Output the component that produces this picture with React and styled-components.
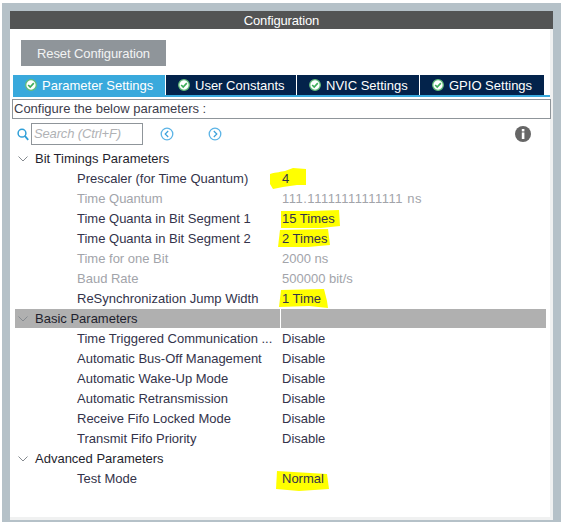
import React from 'react';
import styled, { createGlobalStyle } from 'styled-components';

const GlobalStyle = createGlobalStyle`
    html, body {
        margin: 0;
        padding: 0;
        background: #ffffff;
    }
    body {
        font-family: "Liberation Sans", Arial, sans-serif;
        font-size: 13px;
    }
`

const Frame = styled.div`
    box-sizing: border-box;
    width: 559px;
    height: 519px;
    margin: 3px 0 0 2px;
    padding: 8px 8px 2px;
    background: #b5c1c8;
`

const Panel = styled.div`
    box-sizing: border-box;
    height: 100%;
    background: #ffffff;
    border-right: 3px solid #f0f1f1;
    border-bottom: 3px solid #f0f1f1;
    display: flex;
    flex-direction: column;
`

const Header = styled.div`
    height: 18px;
    margin-right: -3px;
    background: #535454;
    color: #ffffff;
    line-height: 19px;
    text-align: center;
    letter-spacing: -0.15px;
`

const ResetButton = styled.button`
    box-sizing: border-box;
    width: 145px;
    height: 26px;
    margin: 11px 0 0 11px;
    padding: 0;
    border: 0;
    background: #8f959a;
    color: #f2f3f4;
    font: 13px "Liberation Sans", Arial, sans-serif;
    letter-spacing: -0.1px;
`

const TabBar = styled.div`
    display: flex;
    gap: 1px;
    height: 20px;
    margin: 9px 0 0 3px;
    border-bottom: 2px solid #39a9dc;
`

const Tab = styled.div`
    box-sizing: border-box;
    width: ${p => p.$width}px;
    display: flex;
    align-items: center;
    padding-left: 12px;
    gap: 5px;
    background: ${p => (p.$active ? '#39a9dc' : '#03234b')};
    color: #ffffff;
    white-space: nowrap;
`

const ConfigureBox = styled.div`
    box-sizing: border-box;
    width: 539px;
    height: 20px;
    margin: 2px 0 0 2px;
    padding-left: 1px;
    border: 1px solid #8f959a;
    color: #3c3c4b;
    line-height: 18px;
`

const SearchBar = styled.div`
    position: relative;
    display: flex;
    align-items: center;
    height: 22px;
    margin-top: 4px;
    padding-left: 7px;
`

const SearchInput = styled.div`
    box-sizing: border-box;
    width: 112px;
    height: 22px;
    margin-left: 2px;
    padding-left: 2px;
    border: 1px solid #8f959a;
    color: #b0b2b5;
    font-style: italic;
    line-height: 20px;
    letter-spacing: -0.15px;
`

const NavButton = styled.svg`
    margin-left: ${p => p.$gap}px;
`

const InfoIcon = styled.svg`
    margin-left: 293px;
`

const Tree = styled.div`
    margin: 4px 0 0 5px;
    width: 531px;
`

const Row = styled.div`
    display: grid;
    grid-template-columns: 265px 1px 1fr;
    height: 20px;
    line-height: 20px;
    color: ${p => (p.$muted ? '#a2a4aa' : '#33334a')};
    background: ${p => (p.$shaded ? '#b0b0b0' : 'transparent')};
    ${p => p.$shaded && 'height: 19px; margin-bottom: 1px; line-height: 19px;'}
`

const SectionName = styled.div`
    display: flex;
    align-items: center;
    gap: 7px;
    padding-left: 3px;
    color: #1f1f2e;
`

const ParamName = styled.div`
    padding-left: 62px;
    white-space: nowrap;
`

const Divider = styled.div`
    background: ${p => (p.$visible ? '#ffffff' : 'transparent')};
`

const Value = styled.div`
    position: relative;
    padding-left: 1px;
    white-space: nowrap;
`

const ValueText = styled.span`
    position: relative;
    letter-spacing: ${p => p.$tracking || 0}px;
`

const Marker = styled.svg`
    position: absolute;
    left: ${p => p.$left}px;
    top: ${p => p.$top}px;
`

function CheckIcon() {
    return (
        <svg width="12" height="12" viewBox="0 0 12 12">
            <circle cx="6" cy="6" r="5.3" fill="#ffffff" stroke="#62bd78" strokeWidth="1.3" />
            <path d="M3.2 6 5.2 8 8.8 4.2" fill="none" stroke="#3fae5a" strokeWidth="1.7" />
        </svg>
    )
}

function Chevron() {
    return (
        <svg width="10" height="6" viewBox="0 0 10 6">
            <path d="M0.5 0.5 5 5 9.5 0.5" fill="none" stroke="#858a8f" strokeWidth="1" />
        </svg>
    )
}

function SearchIcon() {
    return (
        <svg width="12" height="13" viewBox="0 0 12 13">
            <circle cx="5" cy="5.2" r="3.9" fill="none" stroke="#2f9fd8" strokeWidth="1.5" />
            <path d="M8 8.2 11.2 11.8" stroke="#2f9fd8" strokeWidth="1.8" />
        </svg>
    )
}

function RoundNav({ dir, gap }) {
    const d = dir === 'left' ? 'M8.2 4 5.2 7 8.2 10' : 'M5.8 4 8.8 7 5.8 10'
    return (
        <NavButton $gap={gap} width="14" height="14" viewBox="0 0 14 14">
            <circle cx="7" cy="7" r="5.8" fill="none" stroke="#5cb4e6" strokeWidth="1.3" />
            <path d={d} fill="none" stroke="#39a0dc" strokeWidth="1.2" />
        </NavButton>
    )
}

const markers = {
    prescaler: { left: -12, top: -1, w: 37, h: 21, d: 'M1 6 C8 4 12 4 16 3 L24 0 L37 1 L37 17 L28 17 L14 19 L4 21 L1 16 Z' },
    seg1: { left: 0, top: 1, w: 59, h: 18, d: 'M0 1 L30 1 L58 0 L59 16 L40 18 L0 18 Z' },
    seg2: { left: -3, top: 0, w: 52, h: 18, d: 'M2 1 L50 0 L52 16 L30 18 L0 18 Z' },
    jump: { left: -2, top: 0, w: 50, h: 20, d: 'M2 1 L45 0 L48 12 L49 19 L30 17 L0 18 Z' },
    test: { left: -6, top: 2, w: 54, h: 20, d: 'M2 0 L52 3 L54 18 L24 20 L1 18 Z' },
}

const sections = [
    {
        name: 'Bit Timings Parameters',
        params: [
            { name: 'Prescaler (for Time Quantum)', value: '4', marker: 'prescaler' },
            { name: 'Time Quantum', value: '111.11111111111111 ns', muted: true, tracking: 0.5 },
            { name: 'Time Quanta in Bit Segment 1', value: '15 Times', marker: 'seg1' },
            { name: 'Time Quanta in Bit Segment 2', value: '2 Times', marker: 'seg2' },
            { name: 'Time for one Bit', value: '2000 ns', muted: true },
            { name: 'Baud Rate', value: '500000 bit/s', muted: true },
            { name: 'ReSynchronization Jump Width', value: '1 Time', marker: 'jump' },
        ],
    },
    {
        name: 'Basic Parameters',
        shaded: true,
        params: [
            { name: 'Time Triggered Communication ...', value: 'Disable' },
            { name: 'Automatic Bus-Off Management', value: 'Disable' },
            { name: 'Automatic Wake-Up Mode', value: 'Disable' },
            { name: 'Automatic Retransmission', value: 'Disable' },
            { name: 'Receive Fifo Locked Mode', value: 'Disable' },
            { name: 'Transmit Fifo Priority', value: 'Disable' },
        ],
    },
    {
        name: 'Advanced Parameters',
        params: [{ name: 'Test Mode', value: 'Normal', marker: 'test' }],
    },
]

const tabs = [
    { label: 'Parameter Settings', width: 152, active: true },
    { label: 'User Constants', width: 130 },
    { label: 'NVIC Settings', width: 122 },
    { label: 'GPIO Settings', width: 124 },
]

function App() {
    return (
        <>
            <GlobalStyle />
            <Frame>
                <Panel>
                    <Header>Configuration</Header>
                    <ResetButton>Reset Configuration</ResetButton>
                    <TabBar>
                        {tabs.map(tab => (
                            <Tab key={tab.label} $width={tab.width} $active={tab.active}>
                                <CheckIcon />
                                {tab.label}
                            </Tab>
                        ))}
                    </TabBar>
                    <ConfigureBox>Configure the below parameters :</ConfigureBox>
                    <SearchBar>
                        <SearchIcon />
                        <SearchInput>Search (Ctrl+F)</SearchInput>
                        <RoundNav dir="left" gap={17} />
                        <RoundNav dir="right" gap={34} />
                        <InfoIcon width="16" height="16" viewBox="0 0 16 16">
                            <circle cx="8" cy="8" r="8" fill="#666666" />
                            <rect x="6.8" y="3" width="2.6" height="2.4" fill="#ffffff" />
                            <rect x="6.8" y="6.5" width="2.6" height="6.5" fill="#ffffff" />
                        </InfoIcon>
                    </SearchBar>
                    <Tree>
                        {sections.map(section => (
                            <React.Fragment key={section.name}>
                                <Row $shaded={section.shaded}>
                                    <SectionName>
                                        <Chevron />
                                        {section.name}
                                    </SectionName>
                                    <Divider $visible={section.shaded} />
                                    <Value />
                                </Row>
                                {section.params.map(param => {
                                    const marker = markers[param.marker]
                                    return (
                                        <Row key={param.name} $muted={param.muted}>
                                            <ParamName>{param.name}</ParamName>
                                            <Divider />
                                            <Value>
                                                {marker && (
                                                    <Marker $left={marker.left} $top={marker.top} width={marker.w} height={marker.h}>
                                                        <path d={marker.d} fill="#ffff00" />
                                                    </Marker>
                                                )}
                                                <ValueText $tracking={param.tracking}>{param.value}</ValueText>
                                            </Value>
                                        </Row>
                                    )
                                })}
                            </React.Fragment>
                        ))}
                    </Tree>
                </Panel>
            </Frame>
        </>
    )
}

export default App
